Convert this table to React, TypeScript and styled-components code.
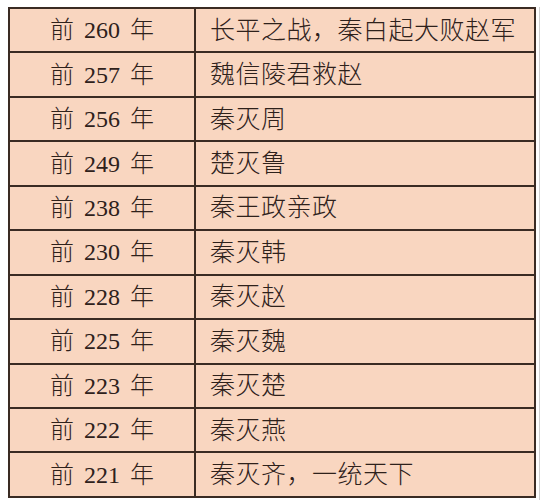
import styled, { createGlobalStyle } from "styled-components";

const GlobalStyle = createGlobalStyle`
  html, body {
    margin: 0;
    padding: 0;
    background: #ffffff;
  }
`;

const Page = styled.div`
  display: flex;
  padding: 7px 0 0 8px;
`;

const Frame = styled.div`
  padding: 0 3px 4px 0;
  border-right: 1px solid #cfcfcf;
`;

const Table = styled.table`
  width: 528px;
  border-collapse: collapse;
  background: #f9d6c0;
  border: 2px solid #3a2b23;
  font-family: "Liberation Serif", "Noto Sans CJK SC", serif;
  font-weight: 300;
  color: #2e211b;
`;

const Row = styled.tr`
  height: 44.45px;
`;

const Cell = styled.td<{ $year?: boolean }>`
  border: 2px solid #3a2b23;
  padding: 0 0 0 ${(p) => (p.$year ? "0" : "14px")};
  width: ${(p) => (p.$year ? "184px" : "auto")};
  text-align: ${(p) => (p.$year ? "center" : "left")};
  font-size: ${(p) => (p.$year ? "24px" : "25px")};
  letter-spacing: ${(p) => (p.$year ? "0" : "0.5px")};
  word-spacing: ${(p) => (p.$year ? "4px" : "0")};
  line-height: 1;
  white-space: nowrap;
`;

const events = [
  ["前 260 年", "长平之战，秦白起大败赵军"],
  ["前 257 年", "魏信陵君救赵"],
  ["前 256 年", "秦灭周"],
  ["前 249 年", "楚灭鲁"],
  ["前 238 年", "秦王政亲政"],
  ["前 230 年", "秦灭韩"],
  ["前 228 年", "秦灭赵"],
  ["前 225 年", "秦灭魏"],
  ["前 223 年", "秦灭楚"],
  ["前 222 年", "秦灭燕"],
  ["前 221 年", "秦灭齐，一统天下"],
];

export default function App() {
  return (
    <>
      <GlobalStyle />
      <Page>
        <Frame>
          <Table>
            <tbody>
              {events.map(([year, text]) => (
                <Row key={year}>
                  <Cell $year>{year}</Cell>
                  <Cell>{text}</Cell>
                </Row>
              ))}
            </tbody>
          </Table>
        </Frame>
      </Page>
    </>
  );
}
